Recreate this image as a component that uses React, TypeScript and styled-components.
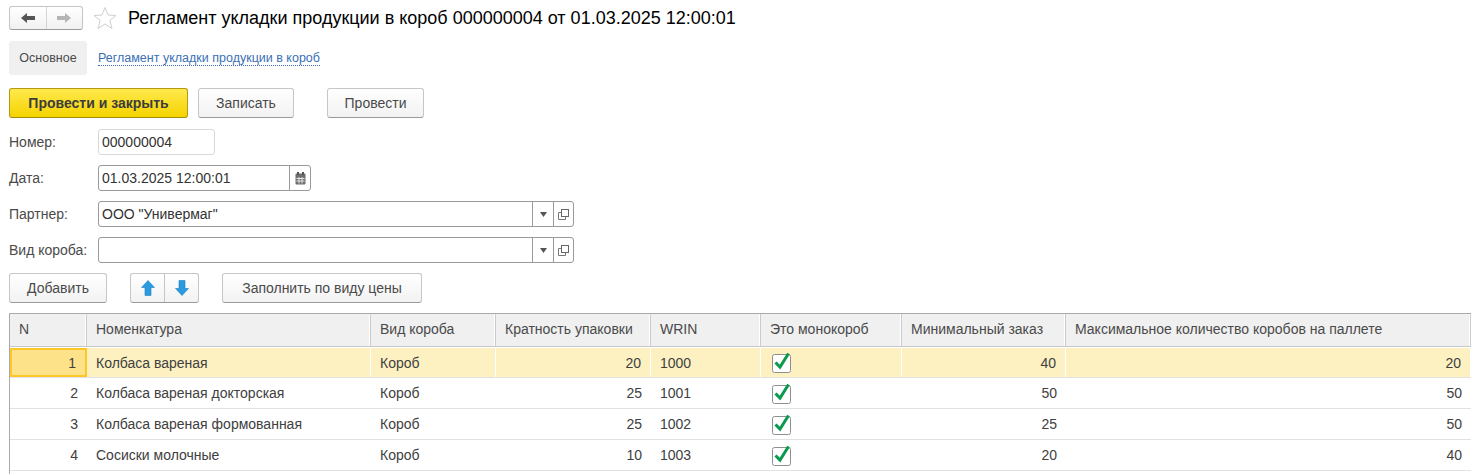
import React from "react"
import styled, { createGlobalStyle } from "styled-components"

const GlobalStyle = createGlobalStyle`
  html, body {
    margin: 0;
    padding: 0;
    background: #fff;
    overflow: hidden;
  }
  * {
    box-sizing: border-box;
  }
`

const columns = "77px 284px 125px 155px 110px 141px 164px 1fr"

const rows = [
  { n: 1, name: "Колбаса вареная", mult: 20, wrin: 1000, min: 40, max: 20 },
  { n: 2, name: "Колбаса вареная докторская", mult: 25, wrin: 1001, min: 50, max: 50 },
  { n: 3, name: "Колбаса вареная формованная", mult: 25, wrin: 1002, min: 25, max: 50 },
  { n: 4, name: "Сосиски молочные", mult: 10, wrin: 1003, min: 20, max: 40 },
]

const headers = [
  "N",
  "Номенкатура",
  "Вид короба",
  "Кратность упаковки",
  "WRIN",
  "Это монокороб",
  "Минимальный заказ",
  "Максимальное количество коробов на паллете",
]

const CheckIcon = () => (
  <svg width="22" height="24" viewBox="0 0 22 24">
    <rect x="2.5" y="5.5" width="18" height="18" rx="2" fill="#fff" stroke="#8f8f8f" />
    <path d="M5.5 13.5 L10 18 L18.5 4.5" fill="none" stroke="#0a9a4e" strokeWidth="3" />
  </svg>
)

const ArrowLeft = ({ color }: { color: string }) => (
  <svg width="16" height="12" viewBox="0 0 16 12">
    <path d="M1 6 L7 1 V4 H15 V8 H7 V11 Z" fill={color} />
  </svg>
)

const ArrowRight = ({ color }: { color: string }) => (
  <svg width="16" height="12" viewBox="0 0 16 12">
    <path d="M15 6 L9 1 V4 H1 V8 H9 V11 Z" fill={color} />
  </svg>
)

const Star = () => (
  <svg width="24" height="24" viewBox="0 0 24 24">
    <path
      d="M12 1.5 L15 9 L23 9.500 L16.800 14.500 L19 22.500 L12 18 L5 22.500 L7.200 14.500 L1 9.500 L9 9 Z"
      fill="#fff"
      stroke="#cfcfcf"
    />
  </svg>
)

const CalendarIcon = () => (
  <svg width="11" height="13" viewBox="0 0 11 13">
    <rect x="0.500" y="1.500" width="10" height="11" rx="1" fill="#6f6f6f" />
    <rect x="2" y="0" width="2" height="3" fill="#555" />
    <rect x="7" y="0" width="2" height="3" fill="#555" />
    <path d="M1.500 6.500 H9.500 M1.500 9 H9.500 M4 5 V11.500 M7 5 V11.500" stroke="#e6e6e6" />
  </svg>
)

const DropIcon = () => (
  <svg width="7" height="5" viewBox="0 0 7 5">
    <path d="M0 0 H7 L3.500 5 Z" fill="#555" />
  </svg>
)

const CopyIcon = () => (
  <svg width="11" height="11" viewBox="0 0 11 11">
    <rect x="3.500" y="0.500" width="7" height="7" fill="#fff" stroke="#666" />
    <path d="M3.500 3.500 H0.500 V10.500 H7.500 V7.500" fill="none" stroke="#777" />
  </svg>
)

const BlueArrow = ({ down }: { down?: boolean }) => (
  <svg width="14" height="16" viewBox="0 0 14 16">
    <path
      d={down ? "M7 15.500 L0.500 8.500 H4 V0.500 H10 V8.500 H13.500 Z" : "M7 0.500 L13.500 7.500 H10 V15.500 H4 V7.500 H0.500 Z"}
      fill="#2a9be0"
      stroke="#1f7fbc"
      strokeWidth="0.6"
    />
  </svg>
)

const App: React.FC = () => {
  return (
    <Page>
      <GlobalStyle />
      <TitleRow>
        <NavGroup>
          <NavButton>
            <ArrowLeft color="#555" />
          </NavButton>
          <NavButton>
            <ArrowRight color="#b5b5b5" />
          </NavButton>
        </NavGroup>
        <StarWrap>
          <Star />
        </StarWrap>
        <Title>Регламент укладки продукции в короб 000000004 от 01.03.2025 12:00:01</Title>
      </TitleRow>

      <TabRow>
        <Tab>Основное</Tab>
        <TabLink>Регламент укладки продукции в короб</TabLink>
      </TabRow>

      <CommandBar>
        <Button $width={179} $primary>
          Провести и закрыть
        </Button>
        <Button $width={96}>Записать</Button>
        <Button $width={97} $gapLeft={23}>
          Провести
        </Button>
      </CommandBar>

      <Form>
        <FieldRow>
          <Label>Номер:</Label>
          <Input $width={117} $light>
            <InputText>000000004</InputText>
          </Input>
        </FieldRow>
        <FieldRow>
          <Label>Дата:</Label>
          <Input $width={213}>
            <InputText>01.03.2025 12:00:01</InputText>
            <InputAction>
              <CalendarIcon />
            </InputAction>
          </Input>
        </FieldRow>
        <FieldRow>
          <Label>Партнер:</Label>
          <Input $width={476}>
            <InputText>ООО "Универмаг"</InputText>
            <InputAction>
              <DropIcon />
            </InputAction>
            <InputAction>
              <CopyIcon />
            </InputAction>
          </Input>
        </FieldRow>
        <FieldRow>
          <Label>Вид короба:</Label>
          <Input $width={476}>
            <InputText />
            <InputAction>
              <DropIcon />
            </InputAction>
            <InputAction>
              <CopyIcon />
            </InputAction>
          </Input>
        </FieldRow>
      </Form>

      <TableBar>
        <Button $width={98}>Добавить</Button>
        <ArrowGroup>
          <ArrowCell>
            <BlueArrow />
          </ArrowCell>
          <ArrowCell>
            <BlueArrow down />
          </ArrowCell>
        </ArrowGroup>
        <Button $width={200}>Заполнить по виду цены</Button>
      </TableBar>

      <Table>
        <HeaderRow>
          {headers.map((h) => (
            <HeaderCell key={h}>{h}</HeaderCell>
          ))}
        </HeaderRow>
        {rows.map((r, i) => (
          <Row key={r.n} $active={i === 0}>
            <Cell $right $focused={i === 0} $active={i === 0}>
              {r.n}
            </Cell>
            <Cell $active={i === 0}>{r.name}</Cell>
            <Cell $active={i === 0}>Короб</Cell>
            <Cell $right $active={i === 0}>
              {r.mult}
            </Cell>
            <Cell $active={i === 0}>{r.wrin}</Cell>
            <CheckCell $active={i === 0}>
              <CheckIcon />
            </CheckCell>
            <Cell $right $active={i === 0}>
              {r.min}
            </Cell>
            <Cell $right $active={i === 0}>
              {r.max}
            </Cell>
          </Row>
        ))}
      </Table>
    </Page>
  )
}

const Page = styled.div`
  display: flex;
  flex-direction: column;
  height: 474px;
  padding: 6px 0 0 9px;
  overflow: hidden;
  font-family: "Liberation Sans", Arial, sans-serif;
  font-size: 14px;
  color: #4a4a4a;
`

const TitleRow = styled.div`
  display: flex;
  align-items: center;
  height: 24px;
`

const NavGroup = styled.div`
  display: flex;
  width: 74px;
  height: 24px;
  border: 1px solid #c4c4c4;
  border-bottom-color: #9a9a9a;
  border-radius: 3px;
  background: linear-gradient(#fff, #f1f1f1);
`

const NavButton = styled.div`
  flex: 1;
  display: flex;
  align-items: center;
  justify-content: center;
  & + & {
    border-left: 1px solid #d4d4d4;
  }
`

const StarWrap = styled.div`
  display: flex;
  margin-left: 10px;
  width: 24px;
`

const Title = styled.div`
  margin-left: 11px;
  font-size: 18px;
  color: #000;
  white-space: nowrap;
`

const TabRow = styled.div`
  display: flex;
  align-items: center;
  margin-top: 11px;
  height: 34px;
`

const Tab = styled.div`
  display: flex;
  align-items: center;
  justify-content: center;
  width: 78px;
  height: 34px;
  background: #f0f0f0;
  border-radius: 3px;
  font-size: 12.500px;
`

const TabLink = styled.a`
  margin-left: 11px;
  font-size: 12.500px;
  color: #3b6fb5;
  border-bottom: 1px dotted #3b6fb5;
  line-height: 14px;
`

const CommandBar = styled.div`
  display: flex;
  gap: 10px;
  margin-top: 13px;
`

const Button = styled.div<{ $width: number; $primary?: boolean; $gapLeft?: number }>`
  display: flex;
  align-items: center;
  justify-content: center;
  flex: none;
  width: ${(p) => p.$width}px;
  height: 30px;
  margin-left: ${(p) => p.$gapLeft ?? 0}px;
  border-radius: 3px;
  border: 1px solid ${(p) => (p.$primary ? "#b39a10" : "#c6c6c6")};
  border-bottom-color: ${(p) => (p.$primary ? "#a38c0a" : "#9a9a9a")};
  background: ${(p) =>
    p.$primary ? "linear-gradient(#ffe94d, #f5d300)" : "linear-gradient(#fff, #f2f2f2)"};
  font-weight: ${(p) => (p.$primary ? 700 : 400)};
  color: ${(p) => (p.$primary ? "#3c3c3c" : "#4a4a4a")};
`

const Form = styled.div`
  display: flex;
  flex-direction: column;
  gap: 10px;
  margin-top: 11px;
`

const FieldRow = styled.div`
  display: flex;
  align-items: center;
  height: 26px;
`

const Label = styled.div`
  width: 89px;
  white-space: nowrap;
`

const Input = styled.div<{ $width: number; $light?: boolean }>`
  display: flex;
  width: ${(p) => p.$width}px;
  height: 26px;
  border: 1px solid ${(p) => (p.$light ? "#d8d8d8" : "#9a9a9a")};
  border-radius: 3px;
  background: #fff;
`

const InputText = styled.div`
  flex: 1;
  padding-left: 3px;
  line-height: 24px;
  color: #333;
`

const InputAction = styled.div`
  display: flex;
  align-items: center;
  justify-content: center;
  width: 21px;
  border-left: 1px solid #9a9a9a;
  & + & {
    width: 20px;
  }
  &:first-of-type {
    width: 26px;
  }
`

const TableBar = styled.div`
  display: flex;
  gap: 23px;
  margin-top: 10px;
`

const ArrowGroup = styled.div`
  display: flex;
  flex: none;
  width: 69px;
  height: 30px;
  border: 1px solid #c6c6c6;
  border-bottom-color: #9a9a9a;
  border-radius: 3px;
  background: linear-gradient(#fff, #f2f2f2);
`

const ArrowCell = styled.div`
  flex: 1;
  display: flex;
  align-items: center;
  justify-content: center;
  & + & {
    border-left: 1px solid #c6c6c6;
  }
`

const Table = styled.div`
  flex: 1;
  margin-top: 10px;
  border-left: 1px solid #aaa;
  border-top: 1px solid #aaa;
`

const HeaderRow = styled.div`
  display: grid;
  grid-template-columns: ${columns};
  height: 33px;
  border-bottom: 1px solid #c8c8c8;
  background: #f0f0f0;
`

const HeaderCell = styled.div`
  padding: 7px 9px 0;
  border-right: 1px solid #cbcbcb;
  white-space: nowrap;
  box-shadow: inset -1px 0 0 #fff;
  &:first-child {
    padding-left: 9px;
  }
`

const Row = styled.div<{ $active?: boolean }>`
  display: grid;
  grid-template-columns: ${columns};
  height: 31px;
  border-bottom: 1px solid #e2e2e2;
  border-top: ${(p) => (p.$active ? "1px solid #fff" : "0")};
`

const Cell = styled.div<{ $right?: boolean; $active?: boolean; $focused?: boolean }>`
  display: flex;
  align-items: center;
  justify-content: ${(p) => (p.$right ? "flex-end" : "flex-start")};
  padding: 0 9px;
  white-space: nowrap;
  color: #404040;
  background: ${(p) => (p.$focused ? "#fee28a" : p.$active ? "#fdf1c2" : "transparent")};
  border-right: ${(p) => (p.$active ? "1px solid #fff" : "0")};
  border: ${(p) => (p.$focused ? "2px solid #fdc72a" : "")};
`

const CheckCell = styled(Cell)`
  padding: 0 0 0 9px;
  & svg {
    display: block;
    margin-top: -3px;
  }
`

export default App
